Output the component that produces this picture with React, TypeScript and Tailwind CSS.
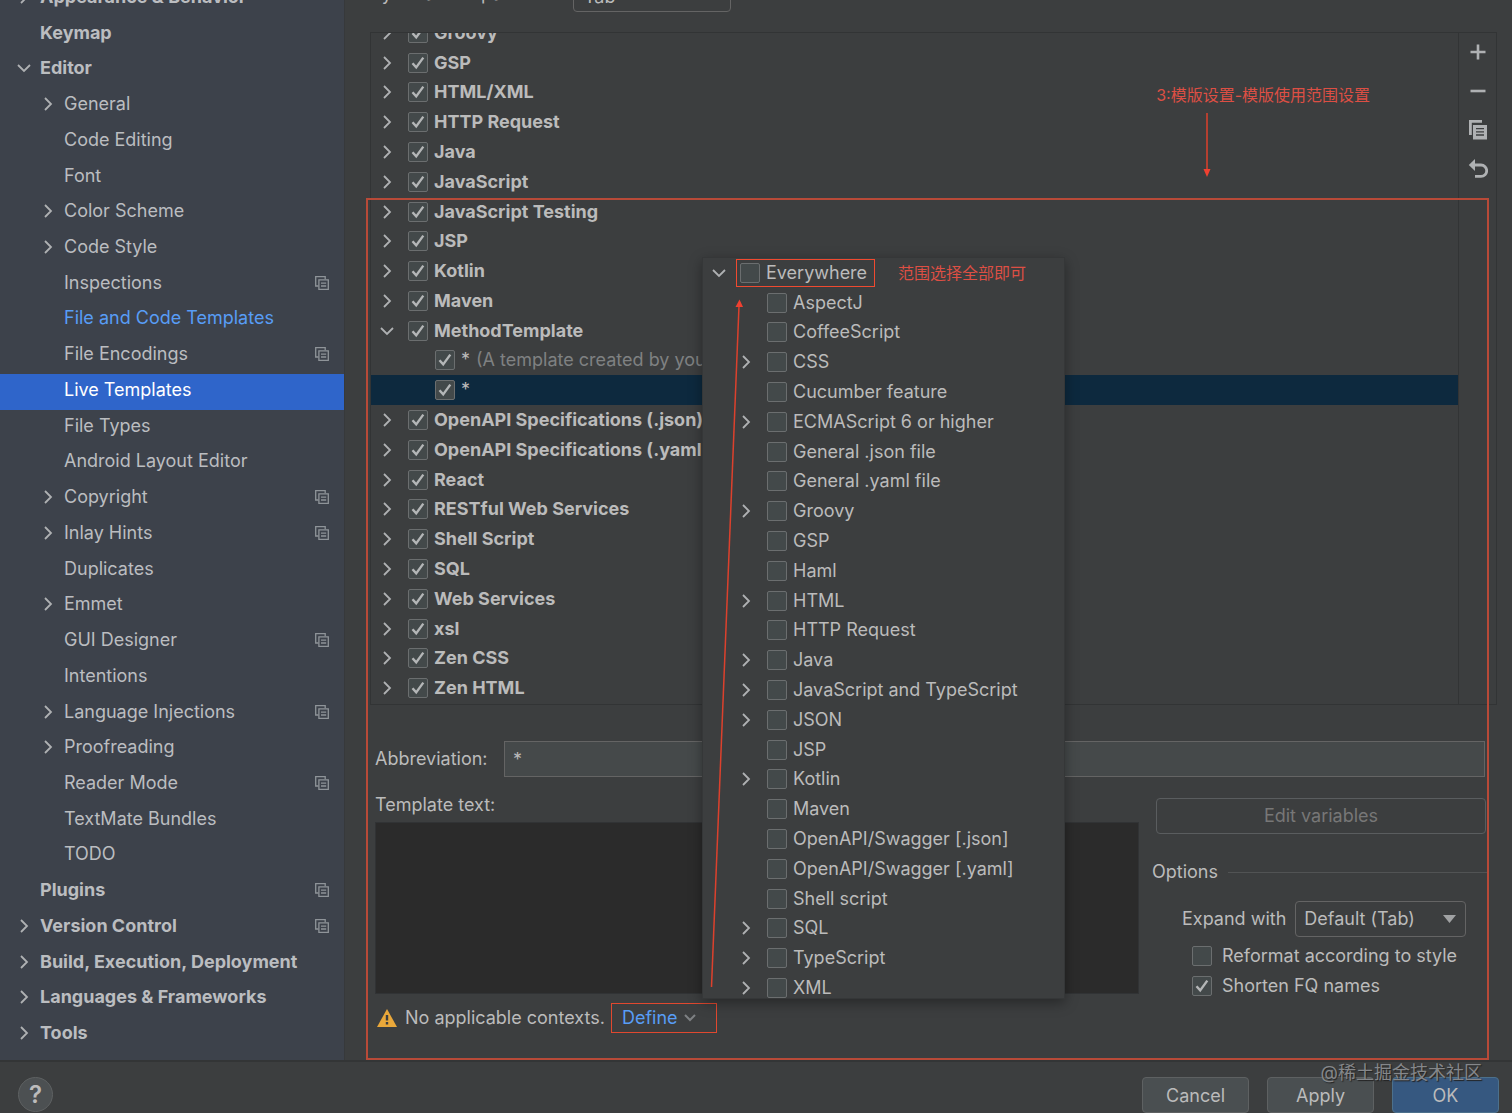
import { useState } from "react";
import type { ReactNode } from "react";

type NavItem = {
  name: string;
  level: 0 | 1;
  arrow?: "right" | "down";
  project?: boolean;
  modified?: boolean;
};

const navItems: NavItem[] = [
  { name: "Appearance & Behavior", level: 0, arrow: "right" },
  { name: "Keymap", level: 0 },
  { name: "Editor", level: 0, arrow: "down" },
  { name: "General", level: 1, arrow: "right" },
  { name: "Code Editing", level: 1 },
  { name: "Font", level: 1 },
  { name: "Color Scheme", level: 1, arrow: "right" },
  { name: "Code Style", level: 1, arrow: "right" },
  { name: "Inspections", level: 1, project: true },
  { name: "File and Code Templates", level: 1, modified: true },
  { name: "File Encodings", level: 1, project: true },
  { name: "Live Templates", level: 1 },
  { name: "File Types", level: 1 },
  { name: "Android Layout Editor", level: 1 },
  { name: "Copyright", level: 1, arrow: "right", project: true },
  { name: "Inlay Hints", level: 1, arrow: "right", project: true },
  { name: "Duplicates", level: 1 },
  { name: "Emmet", level: 1, arrow: "right" },
  { name: "GUI Designer", level: 1, project: true },
  { name: "Intentions", level: 1 },
  { name: "Language Injections", level: 1, arrow: "right", project: true },
  { name: "Proofreading", level: 1, arrow: "right" },
  { name: "Reader Mode", level: 1, project: true },
  { name: "TextMate Bundles", level: 1 },
  { name: "TODO", level: 1 },
  { name: "Plugins", level: 0, project: true },
  { name: "Version Control", level: 0, arrow: "right", project: true },
  { name: "Build, Execution, Deployment", level: 0, arrow: "right" },
  { name: "Languages & Frameworks", level: 0, arrow: "right" },
  { name: "Tools", level: 0, arrow: "right" },
];

type TemplateRow = {
  name: string;
  child?: boolean;
  open?: boolean;
  note?: string;
  selected?: boolean;
};

const templates: TemplateRow[] = [
  { name: "Groovy" },
  { name: "GSP" },
  { name: "HTML/XML" },
  { name: "HTTP Request" },
  { name: "Java" },
  { name: "JavaScript" },
  { name: "JavaScript Testing" },
  { name: "JSP" },
  { name: "Kotlin" },
  { name: "Maven" },
  { name: "MethodTemplate", open: true },
  { name: "*", child: true, note: "(A template created by you)" },
  { name: "*", child: true, selected: true },
  { name: "OpenAPI Specifications (.json)" },
  { name: "OpenAPI Specifications (.yaml)" },
  { name: "React" },
  { name: "RESTful Web Services" },
  { name: "Shell Script" },
  { name: "SQL" },
  { name: "Web Services" },
  { name: "xsl" },
  { name: "Zen CSS" },
  { name: "Zen HTML" },
];

const contexts = [
  { name: "AspectJ" },
  { name: "CoffeeScript" },
  { name: "CSS", group: true },
  { name: "Cucumber feature" },
  { name: "ECMAScript 6 or higher", group: true },
  { name: "General .json file" },
  { name: "General .yaml file" },
  { name: "Groovy", group: true },
  { name: "GSP" },
  { name: "Haml" },
  { name: "HTML", group: true },
  { name: "HTTP Request" },
  { name: "Java", group: true },
  { name: "JavaScript and TypeScript", group: true },
  { name: "JSON", group: true },
  { name: "JSP" },
  { name: "Kotlin", group: true },
  { name: "Maven" },
  { name: "OpenAPI/Swagger [.json]" },
  { name: "OpenAPI/Swagger [.yaml]" },
  { name: "Shell script" },
  { name: "SQL", group: true },
  { name: "TypeScript", group: true },
  { name: "XML", group: true },
];

export default function App() {
  const [active, setActive] = useState("Live Templates");

  return (
    <div className="flex h-screen flex-col overflow-hidden bg-[#3c3e3f] font-['Inter','Noto_Sans_CJK_SC',sans-serif] text-lg leading-6 text-[#bbbbbb]">
      <div className="flex min-h-0 flex-1">
        {/* Settings tree */}
        <nav className="flex w-[344px] shrink-0 flex-col overflow-hidden bg-[#3d424b] pb-[7px]">
          <div className="-mt-[19px] flex flex-1 flex-col">
            {navItems.map((item) => (
              <NavRow
                key={item.name}
                item={item}
                active={item.name === active}
                onSelect={() => setActive(item.name)}
              />
            ))}
          </div>
        </nav>

        <main className="relative flex min-w-0 flex-1 flex-col border-l border-[#37393b] pl-[25px]">
          {/* Default expand key, scrolled half out of view */}
          <div className="flex h-8 shrink-0 items-start">
            <label htmlFor="default-expand" className="-mt-[18px] w-[203px] shrink-0">
              By default expand with
            </label>
            <select
              id="default-expand"
              className="-mt-6 h-9 w-[158px] appearance-none rounded border border-[#646464] bg-transparent px-2.5 pt-1.5"
            >
              <option>Tab</option>
            </select>
          </div>

          {/* Template groups */}
          <div className="mr-[15px] flex min-h-0 flex-1 border border-[#323435]">
            <div className="flex min-w-0 flex-1 flex-col overflow-hidden">
              <ul className="-mt-[15px] mb-px flex flex-1 flex-col">
                {templates.map((row, i) => (
                  <TemplateItem key={i} row={row} />
                ))}
              </ul>
            </div>
            <div className="flex w-[38px] shrink-0 flex-col items-center gap-[15px] border-l border-[#323435] pt-[7px]">
              <ToolButton label="Add"><PlusIcon /></ToolButton>
              <ToolButton label="Remove"><MinusIcon /></ToolButton>
              <ToolButton label="Duplicate"><DuplicateIcon /></ToolButton>
              <ToolButton label="Restore defaults"><UndoIcon /></ToolButton>
            </div>
          </div>

          {/* Template editor */}
          <div className="mt-9 mr-[27px] ml-[5px] flex items-center">
            <label htmlFor="abbreviation" className="w-[129px] shrink-0">Abbreviation:</label>
            <input
              id="abbreviation"
              type="text"
              defaultValue="*"
              className="h-9 min-w-0 flex-1 border border-[#646464] bg-[#45494a] px-2 outline-none"
            />
          </div>

          <div className="mr-[26px] ml-[5px] flex gap-[17px]">
            <div className="flex min-w-0 flex-1 flex-col pt-4">
              <label htmlFor="template-text">Template text:</label>
              <textarea
                id="template-text"
                className="mt-[5px] h-[172px] w-full resize-none border border-[#313335] bg-[#2b2b2b] outline-none"
              />
            </div>

            <div className="flex w-[330px] shrink-0 flex-col pt-[21px]">
              <button disabled className="h-9 rounded border border-[#5a5d5f] text-[#777777]">
                Edit variables
              </button>
              <div className="mt-[26px] -mr-[3px] -ml-1 flex items-center gap-2.5">
                <span>Options</span>
                <div className="h-px flex-1 bg-[#515354]" />
              </div>
              <div className="mt-[17px] flex items-center gap-[9px] pr-5 pl-[26px]">
                <label htmlFor="expand-with" className="shrink-0">Expand with</label>
                <div className="relative flex-1">
                  <select
                    id="expand-with"
                    className="block h-9 w-full appearance-none rounded border border-[#646464] bg-transparent pl-2"
                  >
                    <option>Default (Tab)</option>
                  </select>
                  <svg className="pointer-events-none absolute top-3.5 right-2.5" width="13" height="8" viewBox="0 0 13 8">
                    <path d="M0 0h13L6.500 8z" fill="#a0a2a3" />
                  </svg>
                </div>
              </div>
              <div className="mt-1 flex flex-col pl-9">
                <Check gap="wide">Reformat according to style</Check>
                <Check gap="wide" checked>Shorten FQ names</Check>
              </div>
            </div>
          </div>

          <div className="mt-0.5 mb-[27px] ml-[7px] flex items-center">
            <WarningIcon />
            <span className="ml-2">No applicable contexts.</span>
            <button className="ml-1.5 flex h-[30px] w-[106px] items-center gap-1.5 border border-[#e0482f] pl-2.5 text-[#589df6]">
              Define
              <svg width="12" height="8" viewBox="0 0 12 8" fill="none" stroke="#7e8183" strokeWidth="2">
                <path d="M1 1l5 5 5-5" />
              </svg>
            </button>
          </div>

          <ContextPopup />

          {/* Annotations */}
          <div className="pointer-events-none absolute top-[198px] right-[23px] bottom-0 left-[21px] z-20 border-2 border-[#b84a38]" />
          <div className="pointer-events-none absolute top-[83px] right-[142px] flex flex-col text-base leading-6 text-[#dd4f44]">
            <span>3:模版设置-模版使用范围设置</span>
            <svg className="mt-1.5 ml-[45px]" width="12" height="64" viewBox="0 0 12 64">
              <path d="M6 0v58" stroke="#dc412d" strokeWidth="1.500" />
              <path d="M2.500 56h7L6 64z" fill="#f04030" />
            </svg>
          </div>
        </main>
      </div>

      {/* Dialog buttons */}
      <footer className="relative flex h-[53px] shrink-0 items-start justify-between border-t-2 border-[#333536] pr-[13px] pl-[18px]">
        <button
          aria-label="Help"
          className="mt-[15px] flex size-[35px] items-center justify-center rounded-full border border-[#5e6162] bg-[#4c5052] text-2xl font-semibold"
        >
          ?
        </button>
        <div className="flex gap-[18px] pt-[15px]">
          <button className="h-9 w-[107px] rounded border border-[#5e6162] bg-[#4a4f51] pt-0.5">Cancel</button>
          <button className="h-9 w-[107px] rounded border border-[#5e6162] bg-[#4a4f51] pt-0.5">Apply</button>
          <button className="h-9 w-[107px] rounded border border-[#4c708c] bg-[#365880] pt-0.5">OK</button>
        </div>
        <span className="pointer-events-none absolute -top-px right-[30px] text-lg leading-6 text-[#85878a] [text-shadow:1px_1px_1px_#222]">
          @稀土掘金技术社区
        </span>
      </footer>
    </div>
  );
}

function NavRow({ item, active, onSelect }: { item: NavItem; active: boolean; onSelect: () => void }) {
  const indent = item.level === 0 ? "pl-4 font-bold" : "pl-10";
  const color = active ? "bg-[#2f65ca] text-white" : item.modified ? "text-[#589df6]" : "text-[#bbbdc0]";

  return (
    <a
      href="#"
      onClick={(e) => {
        e.preventDefault();
        onSelect();
      }}
      className={`flex flex-1 items-center gap-2 pr-[15px] pb-1 ${indent} ${color}`}
    >
      <span className="flex w-4 shrink-0 justify-center">{item.arrow && <Chevron open={item.arrow === "down"} />}</span>
      <span className="flex-1 whitespace-nowrap">{item.name}</span>
      {item.project && <ProjectIcon />}
    </a>
  );
}

function TemplateItem({ row }: { row: TemplateRow }) {
  return (
    <li
      className={`flex flex-1 items-center gap-[13px] whitespace-nowrap ${row.child ? "pl-16" : "pl-2"} ${
        row.selected ? "bg-[#0d293e]" : ""
      }`}
    >
      {!row.child && (
        <button aria-label={`Toggle ${row.name}`} className="flex w-4 justify-center">
          <Chevron open={row.open} />
        </button>
      )}
      <Check checked>
        <span className={row.child ? "" : "font-bold"}>{row.name}</span>
        {row.note && <span className="ml-1.5 text-[#7f8182]">{row.note}</span>}
      </Check>
    </li>
  );
}

function ContextPopup() {
  return (
    <div className="absolute top-[257px] bottom-[61px] left-[357px] z-10 flex w-[363px] flex-col overflow-hidden border border-[#353738] bg-[#3c3e3f] shadow-[0_4px_12px_rgba(0,0,0,0.35)]">
      <ul className="-mb-[5px] flex flex-1 flex-col">
        <li className="flex flex-1 items-center gap-[13px] pl-2">
          <button aria-label="Toggle Everywhere" className="flex w-4 justify-center">
            <Chevron open />
          </button>
          <div className="relative">
            <Check>Everywhere</Check>
            <span className="pointer-events-none absolute -inset-x-1 -inset-y-0.5 -right-2 border border-[#f04a30]" />
          </div>
          <span className="ml-[18px] text-base text-[#dd4f44]">范围选择全部即可</span>
        </li>
        {contexts.map((ctx) => (
          <li key={ctx.name} className="flex flex-1 items-center gap-[13px] pl-[35px] whitespace-nowrap">
            <button aria-label={`Toggle ${ctx.name}`} disabled={!ctx.group} className="flex w-4 justify-center">
              {ctx.group && <Chevron />}
            </button>
            <Check>{ctx.name}</Check>
          </li>
        ))}
      </ul>
      <svg className="pointer-events-none absolute top-0 left-0" width="60" height="740" viewBox="0 0 60 740">
        <path d="M8.500 729L36 48" stroke="#dc412d" strokeWidth="1.500" />
        <path d="M32.500 49L36.500 41.500 40 49z" fill="#f04030" />
      </svg>
    </div>
  );
}

function Check({ checked, gap, children }: { checked?: boolean; gap?: "wide"; children: ReactNode }) {
  return (
    <label className={`flex items-center ${gap === "wide" ? "h-[30px] gap-2.5" : "gap-1.5"}`}>
      <span className="relative size-5 shrink-0">
        <input
          type="checkbox"
          defaultChecked={checked}
          className="peer block size-5 appearance-none rounded-xs border border-[#6b6e6f] bg-[#43494a]"
        />
        <svg
          className="pointer-events-none absolute inset-0 hidden peer-checked:block"
          width="20"
          height="20"
          viewBox="0 0 20 20"
          fill="none"
          stroke="#b4b6b7"
          strokeWidth="2.400"
        >
          <path d="M4.500 10.200l3.700 4.200L15.300 4.600" />
        </svg>
      </span>
      <span>{children}</span>
    </label>
  );
}

function ToolButton({ label, children }: { label: string; children: ReactNode }) {
  return (
    <button aria-label={label} className="flex size-6 items-center justify-center">
      {children}
    </button>
  );
}

function Chevron({ open }: { open?: boolean }) {
  return open ? (
    <svg width="14" height="14" viewBox="0 0 14 14" fill="none" stroke="#afb1b3" strokeWidth="1.800">
      <path d="M1 4l6 6 6-6" />
    </svg>
  ) : (
    <svg width="14" height="14" viewBox="0 0 14 14" fill="none" stroke="#afb1b3" strokeWidth="1.800">
      <path d="M4 1l6 6-6 6" />
    </svg>
  );
}

function ProjectIcon() {
  return (
    <svg width="14" height="14" viewBox="0 0 14 14" fill="none" stroke="#8f9499" strokeWidth="1.300">
      <path d="M3.500 10H.7V.7h9.500v2.500" />
      <path d="M3.900 3.900h9.400v9.400H3.900z" />
      <path d="M6 7.200h5.200M6 10h5.200" />
    </svg>
  );
}

function PlusIcon() {
  return (
    <svg width="16" height="16" viewBox="0 0 16 16" stroke="#afb1b3" strokeWidth="2.600">
      <path d="M8 .5v15M.5 8h15" />
    </svg>
  );
}

function MinusIcon() {
  return (
    <svg width="16" height="16" viewBox="0 0 16 16" stroke="#afb1b3" strokeWidth="2.600">
      <path d="M.5 8h15" />
    </svg>
  );
}

function DuplicateIcon() {
  return (
    <svg width="20" height="20" viewBox="0 0 20 20">
      <path d="M1 0h13v2.700H3.800V15H1z" fill="#afb1b3" />
      <path d="M5 5h14v14.500H5z" fill="#afb1b3" />
      <path d="M8 8.600h8M8 11.800h8M8 15h8" stroke="#3c3e3f" strokeWidth="1.300" />
    </svg>
  );
}

function UndoIcon() {
  return (
    <svg width="20" height="20" viewBox="0 0 20 20">
      <path d="M6 6h7a5.700 5.700 0 0 1 0 11.400H7" fill="none" stroke="#afb1b3" strokeWidth="2.800" />
      <path d="M7 0v12L.8 6z" fill="#afb1b3" />
    </svg>
  );
}

function WarningIcon() {
  return (
    <svg width="20" height="18" viewBox="0 0 20 18">
      <path d="M10 0l10 18H0z" fill="#eaa83a" />
      <path d="M8.800 6h2.400v5.500H8.800zM8.800 13h2.400v2.400H8.800z" fill="#3c3e3f" />
    </svg>
  );
}
